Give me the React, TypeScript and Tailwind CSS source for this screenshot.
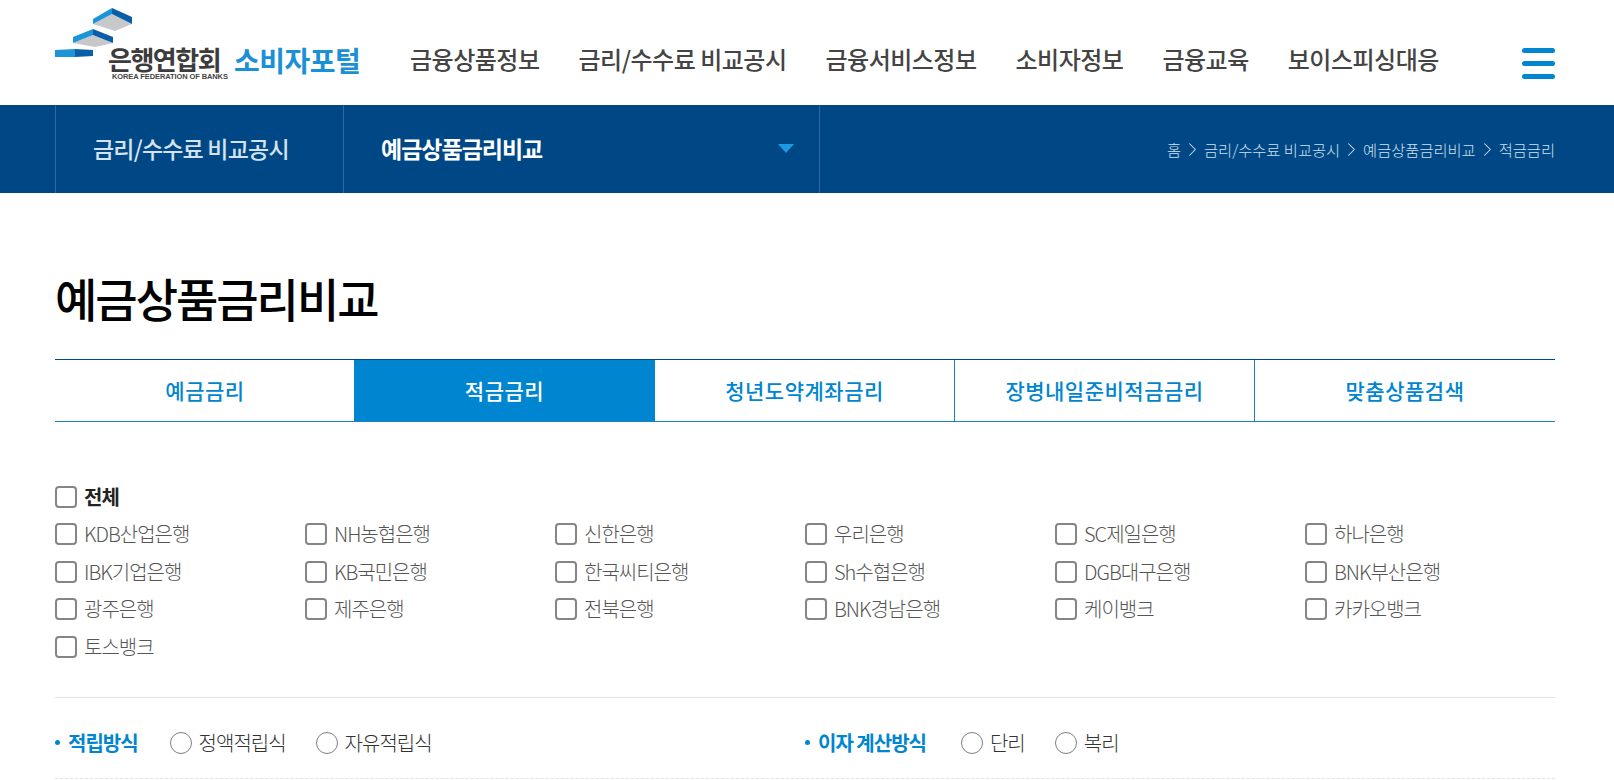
import { ChevronRight } from "lucide-react";

const menus = ["금융상품정보", "금리/수수료 비교공시", "금융서비스정보", "소비자정보", "금융교육", "보이스피싱대응"];
const tabs = ["예금금리", "적금금리", "청년도약계좌금리", "장병내일준비적금금리", "맞춤상품검색"];
const banks = [
  "KDB산업은행", "NH농협은행", "신한은행", "우리은행", "SC제일은행", "하나은행",
  "IBK기업은행", "KB국민은행", "한국씨티은행", "Sh수협은행", "DGB대구은행", "BNK부산은행",
  "광주은행", "제주은행", "전북은행", "BNK경남은행", "케이뱅크", "카카오뱅크",
  "토스뱅크",
];
const crumbs = ["금리/수수료 비교공시", "예금상품금리비교", "적금금리"];

function Logo() {
  return (
    <div className="relative w-[310px] h-[105px] shrink-0">
      <svg className="absolute left-0 top-0" width="80" height="60" viewBox="0 0 80 60">
        <polygon points="38,24 57,14 77,24 60,31" fill="#c6c8ca" />
        <polygon points="38,19 57,8 57,14 38,24" fill="#1c95d8" />
        <polygon points="57,8 77,17 77,24 57,14" fill="#0a5ea8" />
        <polygon points="18,43 38,35 58,43 40,47" fill="#c6c8ca" />
        <polygon points="18,37 38,29 38,35 18,43" fill="#1c95d8" />
        <polygon points="38,29 58,37 58,43 38,35" fill="#0a5ea8" />
        <polygon points="0,50 20,49 20,57 0,57" fill="#1c95d8" />
        <polygon points="20,49 38,50 38,56 20,57" fill="#0a5ea8" />
      </svg>
      <div className="absolute left-[53px] top-[46px] text-[26px] leading-[26px] font-bold tracking-[-1.5px] text-[#3c3c3c] whitespace-nowrap">은행연합회</div>
      <div className="absolute left-[57px] top-[73px] text-[7.5px] leading-[8px] font-bold tracking-[-0.1px] text-[#444] font-['Liberation_Sans',sans-serif] whitespace-nowrap">KOREA FEDERATION OF BANKS</div>
      <div className="absolute left-[179px] top-[40px] text-[28px] leading-[40px] font-bold tracking-[-0.5px] text-[#1a90d6] whitespace-nowrap">소비자포털</div>
    </div>
  );
}

function Check({ label, bold }: { label: string; bold?: boolean }) {
  return (
    <label className="flex items-center h-[37.5px]">
      <span className="w-[22px] h-[22px] rounded-[4px] border-2 border-[#858585] bg-white shrink-0" />
      <span className={bold ? "ml-[7px] text-[20px] font-bold tracking-[-1px] text-[#222]" : "ml-[7px] text-[20px] font-light tracking-[-1px] text-[#555]"}>{label}</span>
    </label>
  );
}

function Radio({ label }: { label: string }) {
  return (
    <label className="flex items-center">
      <span className="w-[22px] h-[22px] rounded-full border-[1.5px] border-[#808080] bg-white shrink-0" />
      <span className="ml-[7px] text-[20px] font-light tracking-[-1px] text-[#333]">{label}</span>
    </label>
  );
}

function OptionTitle({ label }: { label: string }) {
  return (
    <div className="flex items-center text-[#0086d1] text-[20px] font-bold tracking-[-1px]">
      <span className="w-[5px] h-[5px] rounded-full bg-[#0086d1] mr-[8px]" />
      {label}
    </div>
  );
}

export default function App() {
  return (
    <div className="w-[1614px] h-[780px] overflow-hidden bg-white font-['Noto_Sans_CJK_KR','Noto_Sans',sans-serif]">
      <header className="h-[105px] pl-[55px] pr-[59px] flex items-center">
        <Logo />
        <nav className="flex items-center gap-[39px] ml-[45px] mt-[12px]">
          {menus.map((m) => (
            <a key={m} className="text-[24px] font-medium tracking-[-0.5px] text-[#444] whitespace-nowrap">{m}</a>
          ))}
        </nav>
        <button className="ml-auto mt-[21px] flex flex-col gap-[8px] w-[33px]">
          <span className="h-[5px] rounded-full bg-[#0086d1]" />
          <span className="h-[5px] rounded-full bg-[#0086d1]" />
          <span className="h-[5px] rounded-full bg-[#0086d1]" />
        </button>
      </header>

      <div className="h-[88px] bg-[#004885] pl-[55px] pr-[59px] flex items-center text-white">
        <div className="w-[289px] h-full border-x border-[#2b6aa0] flex items-center pl-[37px] pb-[2px] text-[23px] font-medium tracking-[-0.8px] text-[#d5e3ef]">금리/수수료 비교공시</div>
        <div className="w-[476px] h-full border-r border-[#2b6aa0] flex items-center justify-between pl-[37px] pr-[25px] pb-[2px] text-[23px] font-bold tracking-[-1px]">
          예금상품금리비교
          <span className="w-0 h-0 border-x-[8px] border-x-transparent border-t-[9px] border-t-[#1a9ae0]" />
        </div>
        <div className="ml-auto flex items-center text-[15.3px] font-light text-[#cfe0ee]">
          <span>홈</span>
          {crumbs.map((c) => (
            <span key={c} className="flex items-center">
              <ChevronRight size={23} strokeWidth={1.1} />
              {c}
            </span>
          ))}
        </div>
      </div>

      <main className="pl-[55px] pr-[59px]">
        <h1 className="pt-[74px] text-[46px] leading-[60px] font-medium tracking-[-2px] text-black">예금상품금리비교</h1>

        <div className="mt-[32px] grid grid-cols-5 h-[63px] border-t border-t-[#004887] border-b border-b-[#1a80c0]">
          {tabs.map((t, i) => (
            <div
              key={t}
              className={
                i === 1
                  ? "-ml-px flex items-center justify-center bg-[#0086d1] text-white text-[21px] tracking-[0.5px] font-medium"
                  : i > 1 && i < 4
                    ? "flex items-center justify-center border-r border-[#1a80c0] text-[#0086d1] text-[21px] tracking-[0.5px] font-medium"
                    : "flex items-center justify-center text-[#0086d1] text-[21px] tracking-[0.5px] font-medium"
              }
            >
              {t}
            </div>
          ))}
        </div>

        <div className="mt-[56px]">
          <Check label="전체" bold />
          <div className="grid grid-cols-6">
            {banks.map((b) => (
              <Check key={b} label={b} />
            ))}
          </div>
        </div>

        <div className="mt-[31px] h-[82px] pt-[10px] border-t border-t-[#e2e2e2] border-b [border-bottom-style:dashed] border-b-[#e2e2e2] flex items-center">
          <div className="w-[750px] flex items-center">
            <OptionTitle label="적립방식" />
            <div className="ml-[32px] flex gap-[30px]">
              <Radio label="정액적립식" />
              <Radio label="자유적립식" />
            </div>
          </div>
          <OptionTitle label="이자 계산방식" />
          <div className="ml-[35px] flex gap-[30px]">
            <Radio label="단리" />
            <Radio label="복리" />
          </div>
        </div>
      </main>
    </div>
  );
}
